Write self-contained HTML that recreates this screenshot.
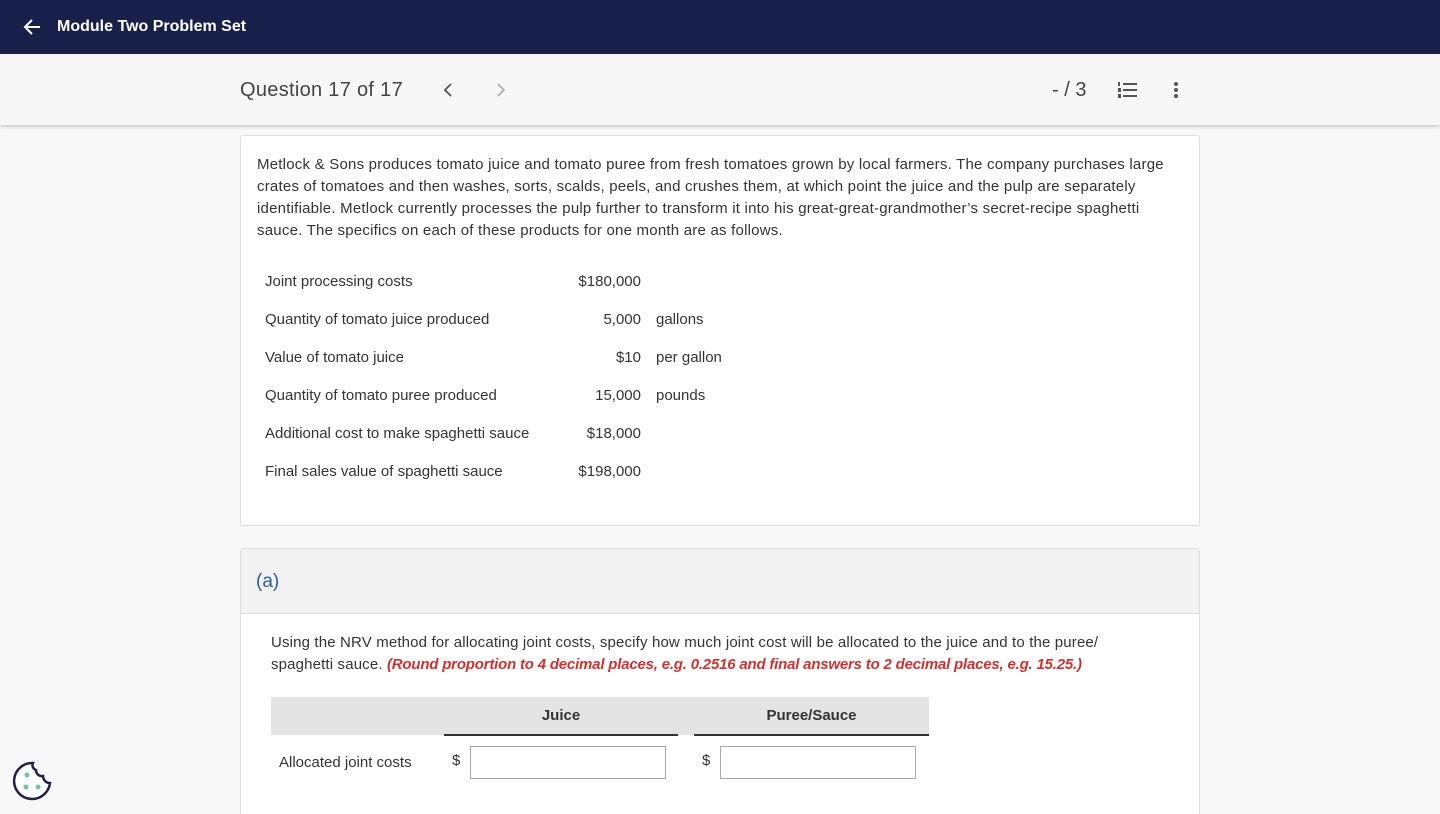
<!DOCTYPE html>
<html><head><style>
*{box-sizing:border-box;margin:0;padding:0}
html{overflow:hidden;height:814px}
body{width:1440px;height:814px;overflow:hidden;background:#f8f8f9;font-family:"Liberation Sans",sans-serif;color:#333;position:relative}
.top{position:absolute;left:0;top:0;width:1440px;height:54px;background:#18204a;color:#fff}
.top .t{position:absolute;left:57px;top:18px;font-size:16px;font-weight:bold}
.sub{position:absolute;left:0;top:54px;width:1440px;height:71px;background:#f7f7f7;box-shadow:0 2px 3px rgba(0,0,0,.18)}
.q{position:absolute;left:240px;top:25px;font-size:20px;color:#444;letter-spacing:.3px}
.card{position:absolute;left:240px;top:135px;width:960px;height:391px;background:#fff;border:1px solid #ddd;border-radius:3px}
p.desc{position:absolute;left:16px;top:18px;width:940px;font-size:15px;line-height:22px;color:#333;letter-spacing:.22px;white-space:nowrap}
.row{position:absolute;left:24px;font-size:15px;color:#333;margin-top:2px}
.v{position:absolute;font-size:15px;text-align:right;width:120px;left:280px;margin-top:2px}
.u{position:absolute;font-size:15px;left:415px;margin-top:2px}
.card2{position:absolute;left:240px;top:548px;width:960px;height:270px;background:#fff;border:1px solid #ddd;border-radius:3px}
.c2h{height:65px;background:#f2f2f2;border-bottom:1px solid #ddd;padding:22px 15px;font-size:19px;color:#2a5d9a}
.inst{position:absolute;left:30px;top:83px;width:920px;font-size:15px;line-height:22px;white-space:nowrap;letter-spacing:.15px}
.inst b{color:#d0312d;font-style:italic;letter-spacing:-.2px}
</style></head><body>
<div class="top">
<svg style="position:absolute;left:23px;top:18px" width="18" height="18" viewBox="0 0 18 18"><path d="M17 9H2M9 2L2 9l7 7" stroke="#fff" stroke-width="2" fill="none"/></svg>
<div class="t">Module Two Problem Set</div></div>
<div class="sub">
<div class="q">Question 17 of 17</div>
<svg style="position:absolute;left:443px;top:29px" width="10" height="14"><path d="M8 1L2 7l6 6" stroke="#555" stroke-width="1.8" fill="none"/></svg>
<svg style="position:absolute;left:496px;top:29px" width="10" height="14"><path d="M2 1l6 6-6 6" stroke="#aaa" stroke-width="1.6" fill="none"/></svg>
<div style="position:absolute;left:1052px;top:25px;font-size:20px;color:#444">- / 3</div>
<svg style="position:absolute;left:1117px;top:27px" width="22" height="18"><g fill="#555"><rect x="6" y="2" width="14" height="2"/><rect x="6" y="8" width="14" height="2"/><rect x="6" y="14" width="14" height="2"/><rect x="1" y="1" width="2" height="4"/><rect x="1" y="7" width="3" height="4"/><rect x="1" y="13" width="3" height="4"/></g></svg>
<svg style="position:absolute;left:1172px;top:27px" width="8" height="18"><g fill="#555"><circle cx="4" cy="3" r="2"/><circle cx="4" cy="9" r="2"/><circle cx="4" cy="15" r="2"/></g></svg>
</div>
<div class="card">
<p class="desc">Metlock &amp; Sons produces tomato juice and tomato puree from fresh tomatoes grown by local farmers. The company purchases large<br>crates of tomatoes and then washes, sorts, scalds, peels, and crushes them, at which point the juice and the pulp are separately<br>identifiable. Metlock currently processes the pulp further to transform it into his great-great-grandmother’s secret-recipe spaghetti<br>sauce. The specifics on each of these products for one month are as follows.</p>
<div class="row" style="top:135px">Joint processing costs</div><div class="v" style="top:135px">$180,000</div>
<div class="row" style="top:173px">Quantity of tomato juice produced</div><div class="v" style="top:173px">5,000</div><div class="u" style="top:173px">gallons</div>
<div class="row" style="top:211px">Value of tomato juice</div><div class="v" style="top:211px">$10</div><div class="u" style="top:211px">per gallon</div>
<div class="row" style="top:249px">Quantity of tomato puree produced</div><div class="v" style="top:249px">15,000</div><div class="u" style="top:249px">pounds</div>
<div class="row" style="top:287px">Additional cost to make spaghetti sauce</div><div class="v" style="top:287px">$18,000</div>
<div class="row" style="top:325px">Final sales value of spaghetti sauce</div><div class="v" style="top:325px">$198,000</div>
</div>
<div class="card2">
<div class="c2h">(a)</div>
<div class="inst">Using the NRV method for allocating joint costs, specify how much joint cost will be allocated to the juice and to the puree/<br>spaghetti sauce. <b>(Round proportion to 4 decimal places, e.g. 0.2516 and final answers to 2 decimal places, e.g. 15.25.)</b></div>
<div style="position:absolute;left:30px;top:148px;width:658px;height:38px;background:#e4e4e4"></div>
<div style="position:absolute;left:203px;top:148px;width:234px;height:39px;border-bottom:2px solid #333;text-align:center;padding-top:10px;font-size:15px;font-weight:bold">Juice</div>
<div style="position:absolute;left:453px;top:148px;width:235px;height:39px;border-bottom:2px solid #333;text-align:center;padding-top:10px;font-size:15px;font-weight:bold">Puree/Sauce</div>
<div style="position:absolute;left:38px;top:205px;font-size:15px">Allocated joint costs</div>
<div style="position:absolute;left:211px;top:203px;font-size:15px">$</div>
<div style="position:absolute;left:229px;top:197px;width:196px;height:33px;border:1px solid #aaa;background:#fff"></div>
<div style="position:absolute;left:461px;top:203px;font-size:15px">$</div>
<div style="position:absolute;left:479px;top:197px;width:196px;height:33px;border:1px solid #aaa;background:#fff"></div>
</div>
<svg style="position:absolute;left:11px;top:760px" width="42" height="42" viewBox="0 0 42 42"><path d="M22 3A18 18 0 1 0 39 23a7 7 0 0 1-7-7 6 6 0 0 1-7-6 5 5 0 0 1-3-7z" stroke="#231f4d" stroke-width="2.5" fill="#fff"/><g fill="#6cc99a"><circle cx="16" cy="15" r="2.5"/><circle cx="15" cy="27" r="2.5"/><circle cx="27" cy="27" r="2.5"/></g></svg>
</body></html>
